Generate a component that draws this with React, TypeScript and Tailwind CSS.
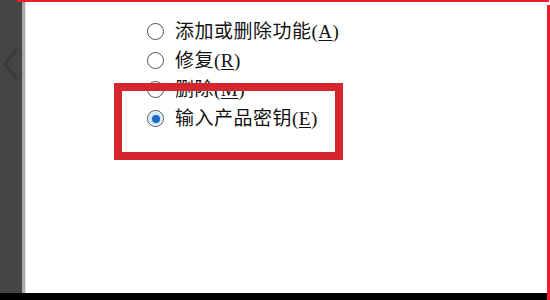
import React from 'react'

const options = [
  { label: '添加或删除功能', key: 'A', checked: false },
  { label: '修复', key: 'R', checked: false },
  { label: '删除', key: 'M', checked: false },
  { label: '输入产品密钥', key: 'E', checked: true },
]

function Radio({ checked }: { checked: boolean }) {
  return (
    <span className="flex h-[17px] w-[17px] shrink-0 items-center justify-center rounded-full border border-[#505050] bg-white">
      {checked && (
        <span className="flex h-[13px] w-[13px] items-center justify-center rounded-full bg-[#cfe6f7]">
          <span className="h-[8px] w-[8px] rounded-full bg-[#1a6cc4]" />
        </span>
      )}
    </span>
  )
}

export default function App() {
  return (
    <div className="relative flex h-[300px] w-[550px] flex-col overflow-hidden bg-white">
      <div className="flex flex-1">
        {/* side handle */}
        <div className="flex w-[22px] shrink-0 bg-[#454545] pt-[48px]">
          <svg width="20" height="32" viewBox="0 0 20 32" fill="none">
            <path d="M16 2 L5 16 L16 30" stroke="#3a3a3a" strokeWidth="3" strokeLinecap="round" strokeLinejoin="round" />
          </svg>
        </div>
        <div className="w-[3px] shrink-0 bg-[#a9a9a9]" />
        <div className="w-px shrink-0 bg-[#e4e4e4]" />

        {/* options */}
        <div
          className="flex flex-1 flex-col pl-[121px] pt-[17px] text-[19px] tracking-[0.5px] text-[#111]"
          style={{ fontFamily: '"Liberation Serif", "Noto Sans CJK SC", serif' }}
        >
          {options.map((o) => (
            <label key={o.key} className="flex h-[29px] items-center gap-[11px]">
              <Radio checked={o.checked} />
              <span className="leading-none">
                {o.label}(<span className="underline underline-offset-2">{o.key}</span>)
              </span>
            </label>
          ))}
        </div>
      </div>
      <div className="h-[7px] shrink-0 bg-black" />

      {/* annotation marks */}
      <div className="absolute left-[114px] top-[83px] h-[77px] w-[229px] border-[8px] border-[#d5262f]" />
      <div className="absolute left-[17px] top-0 h-[2px] w-[532px] bg-[#ea1f29]" />
      <div className="absolute left-[547px] top-[5px] h-[295px] w-[3px] bg-[#ea1f29]" />
    </div>
  )
}
